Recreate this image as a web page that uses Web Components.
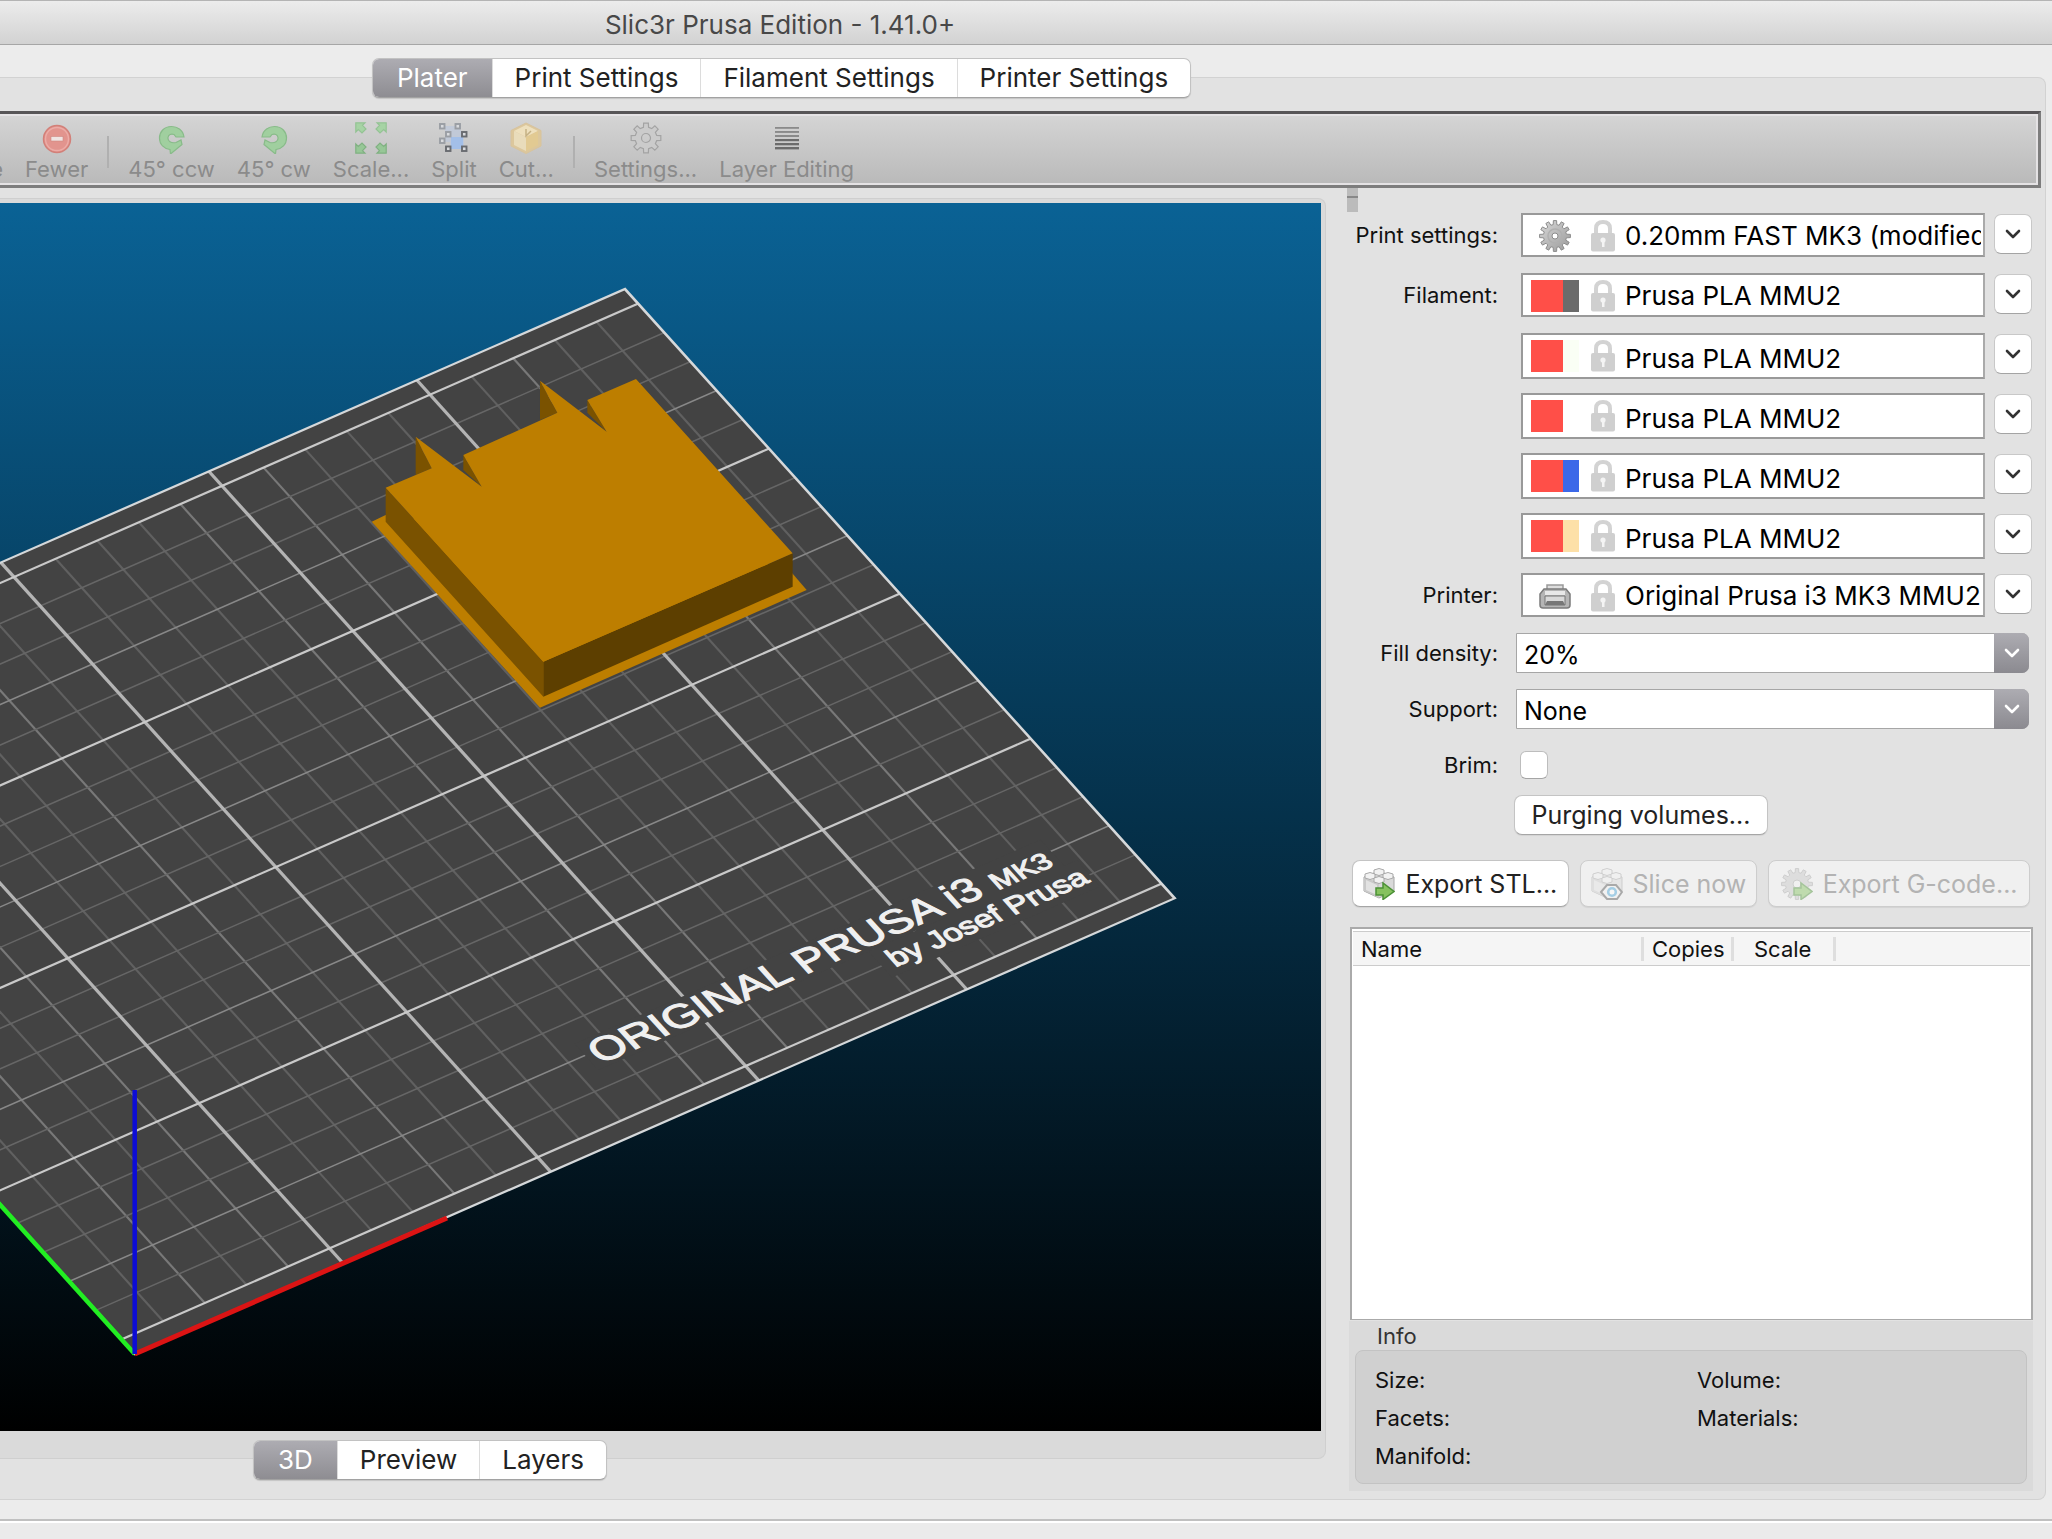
<!DOCTYPE html>
<html lang="en">
<head>
<meta charset="utf-8">
<title>Slic3r Prusa Edition - 1.41.0+</title>
<style>
html,body{margin:0;height:100%}
body{font-family:Inter,"Liberation Sans",sans-serif;font-size:22px;color:#111;background:#ececec;overflow:hidden}
</style>
</head>
<body>
<sl-window heading="Slic3r Prusa Edition - 1.41.0+">
  <sl-tabs slot="tabs" items="Plater|Print Settings|Filament Settings|Printer Settings"></sl-tabs>
  <sl-toolbar slot="toolbar">
    <sl-tool class="cut" icon="more">More</sl-tool>
    <sl-tool icon="fewer">Fewer</sl-tool>
    <hr>
    <sl-tool icon="ccw">45° ccw</sl-tool>
    <sl-tool icon="cw">45° cw</sl-tool>
    <sl-tool icon="scale">Scale...</sl-tool>
    <sl-tool icon="split">Split</sl-tool>
    <sl-tool icon="cut">Cut...</sl-tool>
    <hr>
    <sl-tool icon="gear">Settings...</sl-tool>
    <sl-tool icon="layers">Layer Editing</sl-tool>
  </sl-toolbar>
  <sl-viewport slot="view"></sl-viewport>
  <sl-sidebar slot="side"></sl-sidebar>
</sl-window>

<script>
// Outline of a toothed wheel centred in a 32-unit box, with a round hole.
function gearPath(teeth, outer, inner, hole) {
  const pts = [];
  for (let i = 0; i < teeth; i++)
    for (const [f, r] of [[-.3, inner], [-.2, outer], [.2, outer], [.3, inner]]) {
      const a = (i + f) / teeth * 2 * Math.PI - Math.PI / 2;
      pts.push((16 + r * Math.cos(a)).toFixed(2) + " " + (16 + r * Math.sin(a)).toFixed(2));
    }
  return `M${pts.join("L")}ZM${16 - hole} 16a${hole} ${hole} 0 1 0 ${2 * hole} 0a${hole} ${hole} 0 1 0 ${-2 * hole} 0Z`;
}
const icons = {
  more: `<svg viewBox="0 0 32 32" width="32" height="32"><circle cx="16" cy="16" r="14" fill="#a9c9a4"/></svg>`,
  fewer: `<svg viewBox="0 0 32 32" width="32" height="32"><circle cx="16" cy="17" r="13.5" fill="#e2948e" stroke="#d28079" stroke-width="1.5"/><circle cx="16" cy="17" r="11.5" fill="none" stroke="#ecaca7" stroke-width="1.4"/><rect x="10" y="14.5" width="12" height="4.5" fill="#efe4e3" stroke="#cf8781" stroke-width=".6"/></svg>`,
  ccw: `<svg viewBox="0 0 32 32" width="32" height="32"><path d="M28 15C27 7.500 21 4.500 15.500 4.500C8 4.500 3.500 10 3.500 16C3.500 22.500 8 26.500 14 27.500L14.500 32L26 22.500L25 18L20 20.500C15 21.500 11.500 19 12 15.500C12.500 12.500 15 11.500 18 12.500L20 15Z" fill="#a0cf9f" stroke="#88bb89" stroke-width="1.2"/></svg>`,
  cw: `<svg viewBox="0 0 32 32" width="32" height="32"><path d="M4 15C5 7.500 11 4.500 16.500 4.500C24 4.500 28.500 10 28.500 16C28.500 22.500 24 26.500 18 27.500L17.500 32L6 22.500L7 18L12 20.500C17 21.500 20.500 19 20 15.500C19.500 12.500 17 11.500 14 12.500L12 15Z" fill="#a0cf9f" stroke="#88bb89" stroke-width="1.2"/></svg>`,
  scale: `<svg viewBox="0 0 32 32" width="32" height="32"><defs><path id="a" d="M.8.8H10L7.500 3.300L11 7L7 11L3.300 7.500L.8 10Z" stroke-width="1.2"/></defs><g fill="#a6d3a4" stroke="#94c394"><use href="#a"/><use href="#a" transform="matrix(-1 0 0 1 32 0)"/></g><g fill="#97c797" stroke="#80b182"><use href="#a" transform="matrix(1 0 0 -1 0 32)"/><use href="#a" transform="matrix(-1 0 0 -1 32 32)"/></g></svg>`,
  split: `<svg viewBox="0 0 32 32" width="32" height="32"><path d="M7 4H19L26 12V27H12V20H7Z" fill="#b9c7dd" opacity=".6"/><path d="M13 15H25V27H13Z" fill="#a3bfe8"/><g fill="#d9dbde" stroke-width="1.900"><g stroke="#9a9ea4"><rect x="2" y="2" width="4.500" height="4.500"/><rect x="17.500" y="2" width="4.500" height="4.500"/><rect x="2" y="16.500" width="4.500" height="4.500"/><rect x="8" y="10" width="4.500" height="4.500"/></g><g stroke="#686b70"><rect x="24" y="10" width="4.500" height="4.500"/><rect x="8" y="24.500" width="4.500" height="4.500"/><rect x="24" y="24.500" width="4.500" height="4.500"/></g></g></svg>`,
  cut: `<svg viewBox="0 0 32 32" width="32" height="32"><path d="M16 1L31 8.500V24L16 31.500L1 24V8.500Z" fill="#dcc79c" stroke="#d8c39c"/><path d="M16 3L28 9L16 15L4 9Z" fill="#eee0bd"/><path d="M4 9L16 15V29L4 23Z" fill="#e9dcbb"/><path d="M28 9L16 15V29L28 23Z" fill="#e2ca92"/><path d="M16 7V14L21 9" stroke="#c5b184" stroke-width="1.500" fill="none"/></svg>`,
  gear: `<svg viewBox="0 0 32 32" width="32" height="32"><path d="${gearPath(8, 15, 11, 4.5)}" fill="#cbcbcb" stroke="#a3a3a3" stroke-width="1.2" fill-rule="evenodd"/></svg>`,
  layers: `<svg viewBox="0 0 32 32" width="32" height="32"><g fill="#8a8a8a"><path d="M4 5H28V6.800H4Z"/><path d="M4 9H28V10.900H4Z"/><path d="M4 13H28V15H4Z"/></g><g fill="#6c6c6c"><path d="M4 17H28V19.200H4Z"/><path d="M4 21H28V23.300H4Z"/><path d="M4 25H28V27.400H4Z"/></g></svg>`,
  cog: `<svg viewBox="0 0 32 32" width="32" height="32"><defs><linearGradient id="g" x1="0" y1="0" x2="1" y2="1"><stop offset="0" stop-color="#d8d8d8"/><stop offset="1" stop-color="#9a9a9a"/></linearGradient></defs><path d="${gearPath(12, 15.5, 11.5, 3)}" fill="url(#g)" stroke="#8c8c8c" stroke-width="1" fill-rule="evenodd"/><circle cx="16" cy="16" r="7" fill="none" stroke="#b0b0b0" stroke-width="1.500"/></svg>`,
  printer: `<svg viewBox="0 0 32 32" width="32" height="32"><path d="M8 5H24V12H8Z" fill="#ddd" stroke="#9a9a9a" stroke-width="1.500"/><path d="M5 9H27L31 14V25Q31 28 28 28H4Q1 28 1 25V14Z" fill="#b5b5b5" stroke="#7b7b7b" stroke-width="1.500"/><path d="M6 11H26V15H6Z" fill="#e8e8e8"/><path d="M6 16H26V25H6Z" fill="#d9d9d9" stroke="#777"/><path d="M8 21H24L26 25H6Z" fill="#777"/></svg>`,
  lock: `<svg viewBox="0 0 26 32" width="26" height="32"><path d="M6 14V8.500Q6 2 13 2T20 8.500V14" fill="none" stroke="#d3d3d3" stroke-width="4"/><rect x="1" y="13" width="24" height="18.500" rx="2" fill="#cfcfcf"/><circle cx="13" cy="20" r="2.600" fill="#f4f4f4"/><path d="M12 20H14.500V27H12Z" fill="#f4f4f4"/></svg>`,
  brick: `<path d="M1 9L16 3L31 9V23L16 30L1 23Z" fill="#d9d9d9" stroke="#a5a5a5"/><path d="M16 15V30L1 23V9Z" fill="#c9c9c9"/><path d="M3 12L14 17V27L3 22Z" fill="#e2e2e2"/><g fill="#f2f2f2" stroke="#a8a8a8"><path d="M11 2Q16-1 21 2V6Q16 9 11 6Z"/><path d="M2 6Q7 3 12 6V10Q7 13 2 10Z"/><path d="M20 6Q25 3 30 6V10Q25 13 20 10Z"/><path d="M11 10Q16 7 21 10V14Q16 17 11 14Z"/></g>`,
  arrow: `<path d="M13 20H20V15L31 23.500L20 31.500V27H13Z" fill="#86c25f" stroke="#4b9136" stroke-width="1.500"/>`
};
icons.stl = `<svg viewBox="0 0 32 32" width="32" height="32">${icons.brick}${icons.arrow}</svg>`;
icons.slice = `<svg viewBox="0 0 32 32" width="32" height="32">${icons.brick}<path d="M10 24L16 17H25L31 24L26 31H16Z" fill="#f4f4f4" stroke="#555" stroke-width="2"/><circle cx="21" cy="24" r="3.800" fill="#fff" stroke="#4aa6d8" stroke-width="2.600"/></svg>`;
icons.gcode = `<svg viewBox="0 0 32 32" width="32" height="32"><path d="${gearPath(12, 15.5, 11.5, 4)}" fill="#c8c8c8" stroke="#a5a5a5" fill-rule="evenodd"/>${icons.arrow}</svg>`;
const chevron = `<svg viewBox="0 0 16 10" width="16" height="10" aria-hidden="true"><path d="M2 2L8 8L14 2" fill="none" stroke="currentColor" stroke-width="2.600" stroke-linecap="round" stroke-linejoin="round"/></svg>`;

const reset = `:host,*{box-sizing:border-box}button,select,input{font:inherit;color:inherit;margin:0}button{padding:0;border:0;background:none}`;
class Base extends HTMLElement {
  connectedCallback() {
    if (this.shadowRoot) return;
    this.attachShadow({mode: "open"}).innerHTML = `<style>${reset}${this.css()}</style>${this.html()}`;
  }
  css() { return ""; }
  html() { return "<slot></slot>"; }
  at(n) { return this.getAttribute(n) || ""; }
}

customElements.define("sl-window", class extends Base {
  css() { return `
    :host{display:flex;flex-direction:column;height:100vh;min-height:900px}
    header{height:45px;flex:none;border-top:1px solid #b4b4b4;border-bottom:1px solid #a6a6a6;background:linear-gradient(#ececec,#d2d2d2);display:flex;align-items:center;justify-content:center;font-size:26px;color:#484848;padding-right:492px;padding-top:3px}
    h1{font:inherit;margin:0}
    .body{flex:1;min-height:0;display:flex;flex-direction:column;margin:32px 6px 19px 0;background:#e2e2e2;border:1px solid #d2d2d2;border-left:0;border-radius:0 8px 8px 0}
    .tabs{display:flex;justify-content:center;padding-right:482px;margin-top:-20px;height:53px;flex:none}
    .main{flex:1;min-height:0;display:flex;padding-right:12px}
    .view{flex:1;min-width:0;display:flex}
    footer{height:20px;flex:none;border-top:2px solid #c0c0c0;background:linear-gradient(#fff 2px,#ebebeb 2px)}`; }
  html() { return `<header><h1>${this.at("heading")}</h1></header>
    <div class="body"><div class="tabs"><slot name="tabs"></slot></div><slot name="toolbar"></slot>
    <div class="main"><div class="view"><slot name="view"></slot></div><slot name="side"></slot></div></div><footer></footer>`; }
});

customElements.define("sl-tabs", class extends Base {
  css() { return `
    :host{display:block}
    div{display:flex;height:40px;border-radius:7px;background:#fff;border:1px solid #c2c2c2;border-bottom-color:#a2a2a2;box-shadow:0 1px 1px #0002;overflow:hidden}
    button{padding:0 22px;font-size:26px;line-height:38px;border-left:1px solid #dcdcdc;color:#222;white-space:nowrap}
    button:first-child{border-left:0;background:linear-gradient(#adacb2,#8e8d92);color:#fff;padding:0 24px}`; }
  html() { return `<div role="tablist">${this.at("items").split("|").map((t, i) => `<button role="tab" aria-selected="${!i}">${t}</button>`).join("")}</div>`; }
});

customElements.define("sl-toolbar", class extends Base {
  css() { return `
    :host{display:flex;align-items:center;gap:22px;height:77px;padding-top:5px;flex:none;margin-right:4px;border:solid #7d7d7d;border-width:3px 3px 3px 0;border-top-color:#575557;background:linear-gradient(#d5d5d5,#b9b9b9);box-shadow:inset -2px 2px #e4e2e4,inset 0 -2px #e4e2e4;overflow:hidden}
    ::slotted(hr){width:2px;height:32px;border:0;margin:0 -3px;background:#b0b0b0}
    ::slotted(.cut){width:3px;overflow:hidden;align-items:flex-end!important}`; }
});
customElements.define("sl-tool", class extends Base {
  css() { return `
    :host{display:flex;flex-direction:column;align-items:center}
    button{display:flex;flex-direction:column;align-items:center;gap:2px;font-size:22px;line-height:26px;color:#8b8b8b;white-space:nowrap}
    svg{display:block}`; }
  html() { return `<button disabled>${icons[this.at("icon")]}<span><slot></slot></span></button>`; }
});

customElements.define("sl-viewport", class extends Base {
  css() { return `
    :host{flex:1;min-width:0;display:flex;flex-direction:column;margin-top:10px}
    .box{flex:1;min-height:0;display:flex;flex-direction:column;background:#dadada;border:1px solid #cfcfcf;border-left:0;border-radius:0 8px 8px 0;padding:4px 4px 27px 0}
    .gl{flex:1;min-height:0;width:100%;display:block;background:linear-gradient(#0a6295,#000)}
    .tabs{display:flex;justify-content:center;padding-right:466px;margin-top:-19px;height:59px;flex:none}
    text{font-family:"Liberation Sans",sans-serif;fill:#f0f0f0;stroke:#f0f0f0;stroke-width:.3;white-space:pre}`; }
  html() {
    // Bed coordinates are millimetres; the bed group projects them to the screen.
    const mat = "matrix(4.16 -1.823 2.618 2.901 134.700 1354)";
    const line = (x1, y1, x2, y2, c, w) => `<path d="M${x1} ${-y1}L${x2} ${-y2}" stroke="${c}" stroke-width="${w}"/>`;
    let minor = "", major = "";
    for (let x = 10; x < 250; x += 10)
      if (x % 50) minor += line(x, 5, x, 205, x % 20 === 0 && x % 30 ? "#787878" : "#606060", .5);
    for (let y = 15; y < 205; y += 10)
      if ((y - 5) % 50) minor += line(0, y, 250, y, (y - 25) % 50 === 0 ? "#888" : "#666", .42);
    for (let x = 50; x < 250; x += 50) major += line(x, 0, x, 210, "#b4b4b4", .75);
    for (let y = 5; y < 210; y += 50) major += line(0, y, 250, y, "#c9c9c9", .6);
    return `<div class="box"><svg class="gl" viewBox="0 203 1321 1228" preserveAspectRatio="xMinYMin slice" role="img" aria-label="Print bed">
      <g transform="${mat}" fill="none">
        <path d="M0 0H250V-210H0Z" fill="#434343"/>
        ${minor}${major}
        <path d="M124-20H207L236-19V-29H124Z M189-11H239V-20H189Z" fill="#434343"/>
        <path d="M0 0H250V-210H0Z" stroke="#d5d8da" stroke-width=".6"/>
        <text x="125.300" y="-21.100" font-size="9.800">ORIGINAL PRUSA i3</text>
        <text x="220.800" y="-21.100" font-size="6.700">MK3</text>
        <text x="191.200" y="-13.200" font-size="7.100">by Josef Prusa</text>
      </g>
      <g fill="none" stroke-width="4.500"><path d="M134.700 1354L-210 972" stroke="#22ee22"/><path d="M134.700 1354L447 1218" stroke="#dc1414" stroke-width="5"/><path d="M134.700 1354V1090" stroke="#0c0cd6"/></g>
      <g transform="translate(340 260) scale(.33333)">
        <path d="M95 785L137 765L1340 920L1400 990L600 1343Z" fill="#bd7e00"/>
        <path d="M227 530L275 625L227 645Z M600 362L652 458L600 480Z M370 585L425 680L370 630Z M742 420L800 515L742 458Z M137 683L610 1205V1310L137 785Z" fill="#7a5200"/>
        <path d="M610 1205L1358 880V980L610 1310Z" fill="#5d3f00"/>
        <path d="M137 683L275 625L227 530L425 680L370 585L652 458L600 362L800 515L742 420L888 357L1358 880L610 1205Z" fill="#bd7e00"/>
      </g></svg></div>
      <div class="tabs"><sl-tabs items="3D|Preview|Layers"></sl-tabs></div>`;
  }
});

const rowCss = `
  :host{display:grid;grid-template-columns:151px minmax(0,1fr);column-gap:18px;align-items:center}
  label,.label{text-align:right;font-size:22px;color:#111;white-space:nowrap}`;

customElements.define("sl-preset", class extends Base {
  css() { return `${rowCss}
    :host{height:44px}
    .ctl{display:flex;gap:9px;padding:0 1px 0 5px;align-items:flex-start;height:44px}
    .box{flex:1;min-width:0;height:44px;display:grid;background:#fff;border:2px solid #999;border-right-color:#aaa}
    .box>*{grid-area:1/1}
    :host([name]) .box{height:46px}
    :host([name]) select{padding-top:4px}
    .pics{display:flex;align-items:flex-start;gap:11px;padding:5px 0 0 8px;pointer-events:none;z-index:1;justify-self:start}
    .sw{width:48px;height:32px;display:flex;justify-content:center}
    .sw i{flex:2;background:#ff4f48}.sw b{flex:1}
    svg{display:block}
    select{appearance:none;border:0;background:transparent;width:100%;height:100%;padding:0 2px 0 102px;font-size:26px;color:#000;border-radius:0;text-overflow:clip;overflow:hidden}
    button{width:38px;height:40px;margin-top:1px;background:#fff;border-radius:7px;border:1px solid #c8c8c8;border-bottom-color:#a4a4a4;display:flex;align-items:center;justify-content:center;color:#333;flex:none}`; }
  html() {
    const label = this.at("label"), name = label || this.at("name");
    const pic = this.at("icon") ? `<span class="sw">${icons[this.at("icon")]}</span>` : `<span class="sw"><i></i><b style="background:${this.at("color")}"></b></span>`;
    return `${label ? `<label for="s">${label}</label>` : "<span></span>"}
      <div class="ctl"><div class="box"><span class="pics">${pic}${icons.lock}</span><select id="s" aria-label="${name}"><option>${this.at("value")}</option></select></div>
      <button aria-label="Open ${name}">${chevron}</button></div>`;
  }
});
customElements.define("sl-choice", class extends Base {
  css() { return `${rowCss}
    .ctl{display:grid;height:40px;margin-right:4px}
    .ctl>*{grid-area:1/1}
    select{appearance:none;width:100%;height:40px;border:1px solid #a6a6a6;border-radius:0 7px 7px 0;background:#fff;padding:3px 40px 0 7px;font-size:25px;color:#000}
    .drop{justify-self:end;width:35px;background:linear-gradient(#adacb2,#8b8a90);border-radius:0 7px 7px 0;color:#fff;display:flex;align-items:center;justify-content:center;pointer-events:none}`; }
  html() { return `<label for="s">${this.at("label")}</label><div class="ctl"><select id="s"><option>${this.at("value")}</option></select><span class="drop">${chevron}</span></div>`; }
});
customElements.define("sl-check", class extends Base {
  css() { return `${rowCss} :host{height:40px}
    input{appearance:none;width:28px;height:28px;margin:0 0 0 4px;background:#fff;border:1px solid #bdbdbd;border-bottom-color:#a5a5a5;border-radius:6px;display:block}`; }
  html() { return `<label for="c">${this.at("label")}</label><input id="c" type="checkbox">`; }
});
customElements.define("sl-button", class extends Base {
  css() { return `
    :host{display:block}
    button{display:flex;align-items:center;justify-content:center;gap:10px;width:100%;height:var(--h,47px);background:#fff;border:1px solid #c4c4c4;border-bottom-color:#a6a6a6;border-radius:8px;font-size:25px;color:#222;white-space:nowrap;box-shadow:0 1px 1px #0001}
    button:disabled{background:#f0f0f0;border-color:#cdcdcd;color:#b3b3b3}
    button:disabled svg{opacity:.45}
    svg{flex:none}`; }
  html() { return `<button ${this.hasAttribute("disabled") ? "disabled" : ""}>${icons[this.at("icon")] || ""}<span><slot></slot></span></button>`; }
});

customElements.define("sl-sidebar", class extends Base {
  css() { return `
    :host{flex:none;width:686px;display:flex;flex-direction:column;margin-left:21px;padding-bottom:8px}
    .grip{width:11px;height:24px;background:linear-gradient(#bbb 8px,#888 8px 10px,#bbb 10px)}
    .rows{display:grid;gap:16px;margin-top:1px}
    .purge{display:flex;padding-left:167px;margin-top:10px;--h:40px}
    .purge sl-button{width:254px}
    .acts{display:flex;gap:11px;margin:25px 3px 0 5px}
    .acts :nth-child(1){flex:216}.acts :nth-child(2){flex:177}.acts :nth-child(3){flex:261}
    sl-objects{flex:1;min-height:0;margin:20px 0 0 3px}
    sl-info{margin:1px 0 0 2px}`; }
  html() { return `<div class="grip"></div><div class="rows">
    <sl-preset label="Print settings:" icon="cog" value="0.20mm FAST MK3 (modified)"></sl-preset>
    <sl-preset label="Filament:" color="#6b6b6b" value="Prusa PLA MMU2"></sl-preset>
    <sl-preset name="Filament 2" color="#fafff5" value="Prusa PLA MMU2"></sl-preset>
    <sl-preset name="Filament 3" color="#ffffff" value="Prusa PLA MMU2"></sl-preset>
    <sl-preset name="Filament 4" color="#3b68e8" value="Prusa PLA MMU2"></sl-preset>
    <sl-preset name="Filament 5" color="#fde0a8" value="Prusa PLA MMU2"></sl-preset>
    <sl-preset label="Printer:" icon="printer" value="Original Prusa i3 MK3 MMU2"></sl-preset>
    <sl-choice label="Fill density:" value="20%"></sl-choice>
    <sl-choice label="Support:" value="None"></sl-choice>
    <sl-check label="Brim:"></sl-check></div>
    <div class="purge"><sl-button>Purging volumes...</sl-button></div>
    <div class="acts"><sl-button icon="stl">Export STL...</sl-button><sl-button icon="slice" disabled>Slice now</sl-button><sl-button icon="gcode" disabled>Export G-code...</sl-button></div>
    <sl-objects></sl-objects><sl-info></sl-info>`; }
});
customElements.define("sl-objects", class extends Base {
  css() { return `
    :host{display:block;background:#fff;border:2px solid #aaa;border-width:2px 2px 1px;padding:2px 1px}
    table{width:100%;border-collapse:collapse;table-layout:fixed;background:#f5f5f5;border:1px solid #ccc;border-width:1px 0}
    th{height:34px;padding:0;font-weight:400;font-size:22px;text-align:left;color:#111}
    th span{display:block;line-height:24px;padding-left:8px;border-right:3px solid #dedede}
    th:nth-child(3) span{padding-left:20px}`; }
  html() { return `<table><colgroup><col style="width:291px"><col style="width:90px"><col style="width:102px"><col></colgroup><thead><tr><th><span>Name</span></th><th><span>Copies</span></th><th><span>Scale</span></th><td></td></tr></thead><tbody></tbody></table>`; }
});
customElements.define("sl-info", class extends Base {
  css() { return `
    :host{display:block;background:#dadada;padding:1px 6px 7px;font-size:22px;line-height:28px}
    h2{font:inherit;margin:0 0 0 22px;color:#333}
    div{display:grid;grid-template-columns:322px 1fr;row-gap:10px;background:#d0d0d0;border:1px solid #c3c3c3;border-radius:8px;padding:15px 20px 13px 19px}`; }
  html() { return `<h2>Info</h2><div><span>Size:</span><span>Volume:</span><span>Facets:</span><span>Materials:</span><span>Manifold:</span></div>`; }
});
</script>
</body>
</html>
